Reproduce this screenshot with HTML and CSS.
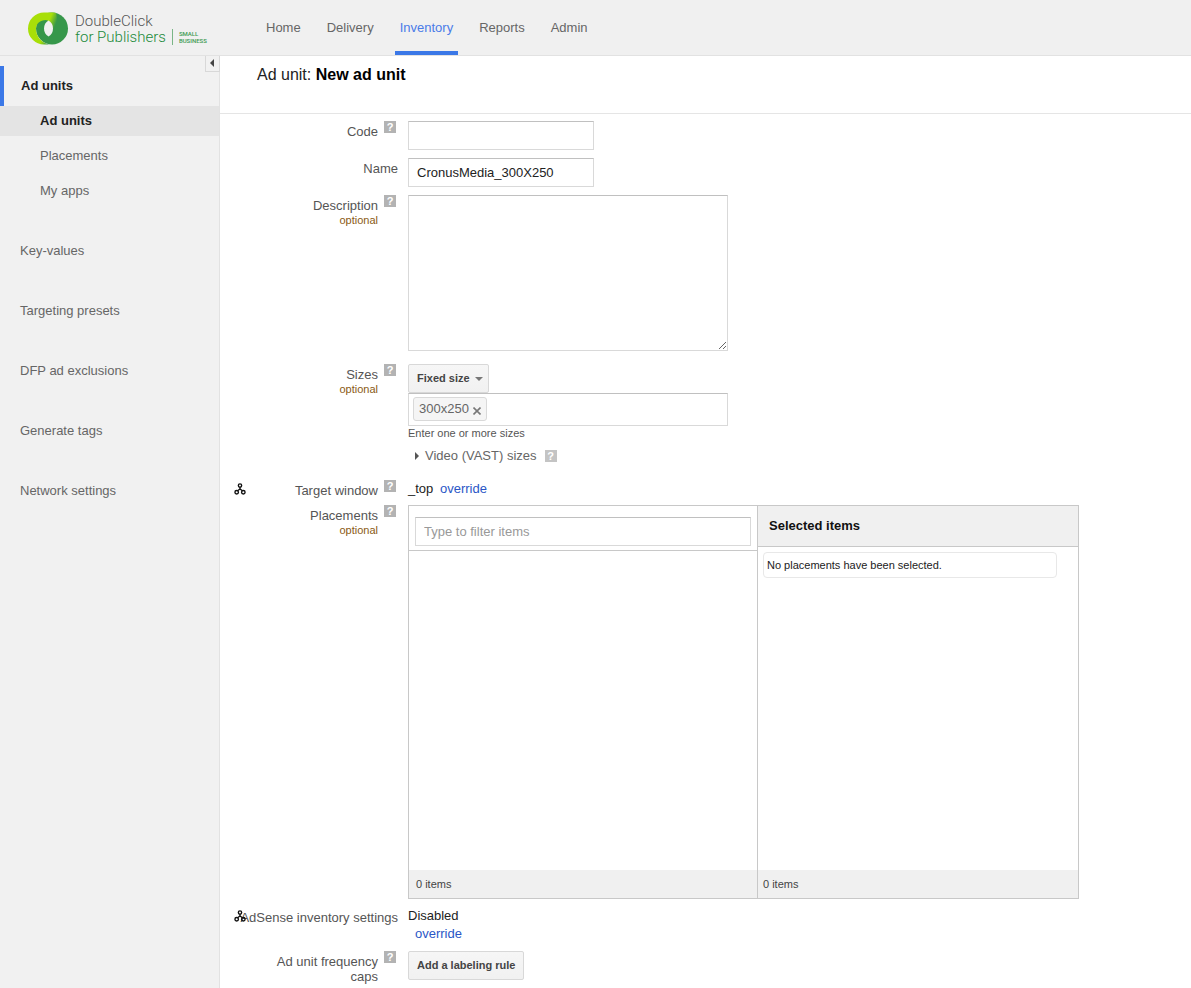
FILE: index.html
```html
<!DOCTYPE html>
<html lang="en">
<head>
<meta charset="utf-8">
<title>New ad unit</title>
<link rel="stylesheet" href="styles.css">
</head>
<body>
<svg width="0" height="0" class="sprite" aria-hidden="true">
  <symbol id="inherit" viewBox="0 0 13 13">
    <g fill="none" stroke="#111" stroke-width="1.5">
      <circle cx="6.5" cy="2.8" r="1.8"/>
      <circle cx="2.9" cy="10" r="1.9"/>
      <circle cx="10.1" cy="10" r="1.9"/>
      <path d="M6.500 4.600v2.400M6.500 6.500L3.800 8.400M6.500 6.500l2.700 1.900"/>
    </g>
  </symbol>
</svg>
<header class="topbar">
  <a class="logo" href="#">
    <svg class="logo-mark" width="41" height="33" viewBox="0 0 41 33" aria-hidden="true">
      <defs>
        <linearGradient id="lime" gradientUnits="userSpaceOnUse" x1="21" y1="0" x2="31" y2="4">
          <stop offset="0.3" stop-color="#a8df08"/>
          <stop offset="1" stop-color="#36974a"/>
        </linearGradient>
      </defs>
      <circle cx="24" cy="16.500" r="16" fill="#36974a"/>
      <path fill="url(#lime)" d="M16 .5A16 16 0 0 0 16 32.500H21C13 30.500 8 24 8 17C8 11.500 12 8 18 8C22 9 24.500 12 25 17C28.500 14 30 7 28 1C26.500 .5 25 .5 24 .5z"/>
      <path fill="#f0f0f0" d="M20.500 8.500C23.500 10 25 13 25 16.500S23.500 23 20.500 24.500C17.500 23 16 20 16 16.500S17.500 10 20.500 8.500z"/>
    </svg>
    <span class="logo-text">
      <span class="logo-name">DoubleClick</span>
      <span class="logo-sub">for Publishers</span>
    </span>
    <span class="logo-tier">SMALL<br>BUSINESS</span>
  </a>
  <nav class="tabs">
    <a href="#">Home</a>
    <a href="#">Delivery</a>
    <a href="#" class="active">Inventory</a>
    <a href="#">Reports</a>
    <a href="#">Admin</a>
  </nav>
</header>
<div class="page">
  <aside class="sidebar">
    <button class="collapse" type="button" aria-label="Collapse"></button>
    <nav class="side-nav">
      <a class="side-item current" href="#">Ad units</a>
      <div class="side-sub">
        <a class="current" href="#">Ad units</a>
        <a href="#">Placements</a>
        <a href="#">My apps</a>
      </div>
      <a class="side-item" href="#">Key-values</a>
      <a class="side-item" href="#">Targeting presets</a>
      <a class="side-item" href="#">DFP ad exclusions</a>
      <a class="side-item" href="#">Generate tags</a>
      <a class="side-item" href="#">Network settings</a>
    </nav>
  </aside>
  <main class="main">
    <h1 class="title">Ad unit: <strong>New ad unit</strong></h1>
    <form class="form">
      <div class="row">
        <div class="label"><label for="code">Code</label><button class="help" type="button">?</button></div>
        <div class="field"><input class="text" id="code" type="text"></div>
      </div>
      <div class="row">
        <div class="label"><label for="name">Name</label></div>
        <div class="field"><input class="text" id="name" type="text" value="CronusMedia_300X250"></div>
      </div>
      <div class="row">
        <div class="label"><label for="desc">Description<small>optional</small></label><button class="help" type="button">?</button></div>
        <div class="field desc"><textarea class="area" id="desc"></textarea></div>
      </div>
      <div class="row">
        <div class="label"><label for="sizes">Sizes<small>optional</small></label><button class="help" type="button">?</button></div>
        <div class="field sizes">
          <button class="button" type="button">Fixed size<span class="caret"></span></button>
          <div class="tags">
            <span class="tag">300x250<button class="remove" type="button" aria-label="Remove 300x250"><svg width="8" height="8" viewBox="0 0 8 8"><path d="M.5 .5l7 7M7.500 .5l-7 7" stroke="#777" stroke-width="1.600"/></svg></button></span>
            <input id="sizes" type="text">
          </div>
          <p class="hint">Enter one or more sizes</p>
          <div class="video"><button class="expand" type="button"><span class="arrow"></span>Video (VAST) sizes</button><button class="help light" type="button">?</button></div>
        </div>
      </div>
      <div class="row line">
        <svg class="inherit" width="12" height="12"><use href="#inherit"/></svg>
        <div class="label"><span class="caption">Target window</span><button class="help" type="button">?</button></div>
        <div class="field value">_top <a class="override" href="#">override</a></div>
      </div>
      <div class="row">
        <div class="label"><label for="filter">Placements<small>optional</small></label><button class="help" type="button">?</button></div>
        <div class="field picker">
          <section class="pane">
            <div class="filter"><input class="text" id="filter" type="text" placeholder="Type to filter items"></div>
            <div class="list"></div>
            <footer class="count">0 items</footer>
          </section>
          <section class="pane selected">
            <h2 class="pane-title">Selected items</h2>
            <div class="list"><p class="empty">No placements have been selected.</p></div>
            <footer class="count">0 items</footer>
          </section>
        </div>
      </div>
      <div class="row">
        <svg class="inherit" width="12" height="12"><use href="#inherit"/></svg>
        <div class="label"><span class="caption wide">AdSense inventory settings</span></div>
        <div class="field stacked"><span>Disabled</span><a class="override" href="#">override</a></div>
      </div>
      <div class="row">
        <div class="label"><span class="caption">Ad unit frequency caps</span><button class="help" type="button">?</button></div>
        <div class="field"><button class="button" type="button">Add a labeling rule</button></div>
      </div>
    </form>
  </main>
</div>
</body>
</html>
```
FILE: styles.css
```css
* { box-sizing: border-box; }

body {
  margin: 0;
  min-height: 100vh;
  display: flex;
  flex-direction: column;
  font: 13px/15px "Liberation Sans", Arial, sans-serif;
  color: #222;
  background: #fff;
}

button, input, textarea { font: inherit; color: inherit; margin: 0; }
button { cursor: pointer; }
a { text-decoration: none; }
.sprite { position: absolute; }

/* Top bar */
.topbar {
  display: flex;
  height: 56px;
  background: #f0f0f0;
  border-bottom: 1px solid #e2e2e2;
}
.logo {
  display: flex;
  width: 261px;
  padding: 12px 0 0 28px;
  font-family: Roboto, sans-serif;
}
.logo-text {
  display: flex;
  flex-direction: column;
  margin-left: 6px;
  padding-top: 1px;
  font-size: 15px;
  line-height: 16px;
  font-weight: 300;
}
.logo-name { color: #555; }
.logo-sub { color: #228a3a; }
.logo-tier {
  align-self: flex-start;
  margin: 17px 0 0 6px;
  padding: 1px 0 1px 6px;
  border-left: 1px solid #79b586;
  font-size: 6px;
  line-height: 7px;
  font-weight: 500;
  color: #3d9a50;
}
.tabs { display: flex; gap: 16px; }
.tabs a {
  padding: 20px 5px 0;
  color: #666;
  border-bottom: 4px solid transparent;
}
.tabs .active { color: #4a7be8; border-color: #3b78e7; }

/* Sidebar */
.page { flex: 1; display: flex; }
.sidebar {
  position: relative;
  flex: none;
  width: 220px;
  padding-top: 10px;
  background: #f1f1f1;
  border-right: 1px solid #e2e2e2;
}
.collapse {
  position: absolute;
  top: 0;
  right: -1px;
  width: 15px;
  height: 16px;
  padding: 0 2px 2px 0;
  display: grid;
  place-items: center;
  background: #f1f1f1;
  border: 1px solid #d8d8d8;
  border-top: 0;
}
.collapse::before {
  content: "";
  border: 4px solid transparent;
  border-left: 0;
  border-right-color: #444;
}
.side-nav { display: flex; flex-direction: column; gap: 20px; }
.side-nav a { color: #666; }
.side-nav .current { color: #222; font-weight: bold; }
.side-item { padding: 0 20px; line-height: 40px; }
.side-item.current {
  padding-left: 17px;
  border-left: 4px solid #3b78e7;
  margin-bottom: -20px;
}
.side-sub { display: flex; flex-direction: column; gap: 5px; padding-bottom: 5px; }
.side-sub a { padding-left: 40px; line-height: 30px; }
.side-sub .current { background: #e4e4e4; }

/* Form */
.main { flex: 1; min-width: 0; }
.title {
  margin: 0;
  height: 58px;
  padding: 9px 37px;
  font-size: 16px;
  line-height: 20px;
  font-weight: normal;
  border-bottom: 1px solid #e5e5e5;
}
.title strong { color: #000; }
.form {
  display: flex;
  flex-direction: column;
  gap: 8px;
  padding: 7px 20px 0 0;
}
.row {
  position: relative;
  display: grid;
  grid-template-columns: 178px minmax(0, 671px);
  column-gap: 10px;
  align-items: start;
}
.row.line { height: 17px; }
.label {
  display: flex;
  justify-content: flex-end;
  align-items: flex-start;
  gap: 6px;
  color: #555;
  text-align: right;
}
.label label, .caption { padding-top: 3px; }
.caption { max-width: 120px; }
.caption.wide { max-width: none; }
.label small { display: block; font-size: 11px; color: #8a5a14; }
.inherit { position: absolute; left: 14px; top: 3px; }

.help {
  width: 12px;
  height: 12px;
  margin-right: 2px;
  padding: 0;
  border: 0;
  background: #b3b3b3;
  color: #fff;
  font-size: 11px;
  line-height: 12px;
  font-weight: bold;
}
.help.light { background: #c4c4c4; }

.text, .area, .tags {
  display: block;
  border: 1px solid #d9d9d9;
  border-top-color: #c0c0c0;
  background: #fff;
}
.text { width: 186px; height: 29px; padding: 0 8px; }
.desc { padding-bottom: 5px; }
.area { width: 320px; max-width: 100%; height: 156px; padding: 8px; }

.button {
  display: flex;
  align-items: center;
  gap: 5px;
  height: 29px;
  padding: 0 8px;
  font-size: 11px;
  font-weight: bold;
  color: #444;
  border: 1px solid #d8d8d8;
  border-radius: 2px;
  background: linear-gradient(#f6f6f6, #f1f1f1);
}
.caret { border: 4px solid transparent; border-top-color: #777; border-bottom: 0; }
.sizes .button { padding-right: 5px; }

.tags {
  display: flex;
  width: 320px;
  max-width: 100%;
  height: 33px;
  padding: 3px 4px;
}
.tags input { flex: 1; min-width: 0; border: 0; outline: 0; background: none; }
.tag {
  display: flex;
  align-items: center;
  gap: 4px;
  height: 24px;
  padding: 0 5px;
  line-height: 22px;
  color: #666;
  border: 1px solid #d9d9d9;
  border-radius: 3px;
  background: #f5f5f5;
}
.remove { display: flex; padding: 4px 0 0; border: 0; background: none; }
.hint { margin: 0; font-size: 11px; color: #555; }
.video { display: flex; align-items: center; gap: 8px; padding: 7px 0 9px 7px; color: #666; }
.expand { display: flex; align-items: center; gap: 6px; padding: 0; border: 0; background: none; }
.arrow { border: 4px solid transparent; border-left-color: #555; border-right: 0; }

.value { line-height: 17px; }
.override { color: #2a56c6; }
.value .override { margin-left: 3px; }
.stacked { display: flex; flex-direction: column; align-items: flex-start; line-height: 18px; }
.stacked .override { margin-left: 7px; }

/* Placement picker */
.picker {
  display: grid;
  grid-template-columns: 348fr 321fr;
  border: 1px solid #c8c8c8;
}
.pane { display: flex; flex-direction: column; height: 392px; }
.selected { border-left: 1px solid #c8c8c8; }
.filter { padding: 11px 6px 4px; border-bottom: 1px solid #c8c8c8; }
.filter .text { width: 100%; }
.filter .text::placeholder { color: #999; opacity: 1; }
.list { flex: 1; padding: 5px 21px 0 5px; }
.pane-title {
  margin: 0;
  padding: 0 11px;
  font-size: 13px;
  line-height: 40px;
  color: #111;
  background: #f0f0f0;
  border-bottom: 1px solid #c8c8c8;
}
.empty {
  margin: 0;
  padding: 0 3px;
  font-size: 11px;
  line-height: 24px;
  border: 1px solid #e8e8e8;
  border-radius: 4px;
}
.count {
  padding: 0 7px;
  font-size: 11px;
  line-height: 28px;
  color: #444;
  background: #f0f0f0;
}
.selected .count { padding-left: 5px; }
```
